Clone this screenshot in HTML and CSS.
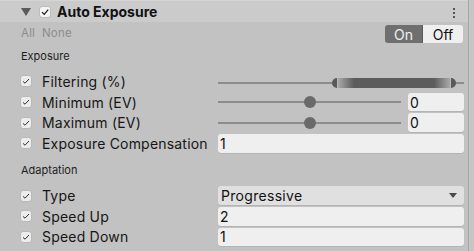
FILE: index.html
```html
<!DOCTYPE html>
<html>
<head>
<meta charset="utf-8">
<link rel="stylesheet" href="styles.css">
</head>
<body>
<div class="frame">
  <div class="main">
    <div class="header">
      <span class="tri"></span>
      <span class="cb hcb"><svg viewBox="0 0 10 10" width="10" height="10"><path d="M2 5.2 L4.2 7.4 L8.2 2.6" fill="none" stroke="#1a1a1a" stroke-width="1.2"/></svg></span>
      <span class="title">Auto Exposure</span>
      <span class="dots"><i></i><i></i><i></i></span>
    </div>
    <div class="toolbar">
      <span class="allnone">All&nbsp; None</span>
      <div class="toggle"><span class="on">On</span><span class="off">Off</span></div>
    </div>
    <div class="section s1">Exposure</div>
    <div class="row">
      <span class="cb"><svg viewBox="0 0 10 10" width="10" height="10"><path d="M2 5.4 L4 7.2 L8 3" fill="none" stroke="#333" stroke-width="1"/></svg></span>
      <span class="label">Filtering (%)</span>
      <div class="ctrl">
        <div class="range">
          <div class="track"></div>
          <div class="bar"><span class="cap l"></span><span class="body"></span><span class="cap r"></span></div>
        </div>
      </div>
    </div>
    <div class="row">
      <span class="cb"><svg viewBox="0 0 10 10" width="10" height="10"><path d="M2 5.4 L4 7.2 L8 3" fill="none" stroke="#333" stroke-width="1"/></svg></span>
      <span class="label">Minimum (EV)</span>
      <div class="ctrl">
        <div class="slider"><div class="track"></div><span class="knob"></span></div>
        <div class="field small">0</div>
      </div>
    </div>
    <div class="row">
      <span class="cb"><svg viewBox="0 0 10 10" width="10" height="10"><path d="M2 5.4 L4 7.2 L8 3" fill="none" stroke="#333" stroke-width="1"/></svg></span>
      <span class="label">Maximum (EV)</span>
      <div class="ctrl">
        <div class="slider"><div class="track"></div><span class="knob"></span></div>
        <div class="field small">0</div>
      </div>
    </div>
    <div class="row">
      <span class="cb"><svg viewBox="0 0 10 10" width="10" height="10"><path d="M2 5.4 L4 7.2 L8 3" fill="none" stroke="#333" stroke-width="1"/></svg></span>
      <span class="label">Exposure Compensation</span>
      <div class="ctrl"><div class="field">1</div></div>
    </div>
    <div class="section s2">Adaptation</div>
    <div class="row">
      <span class="cb"><svg viewBox="0 0 10 10" width="10" height="10"><path d="M2 5.4 L4 7.2 L8 3" fill="none" stroke="#333" stroke-width="1"/></svg></span>
      <span class="label">Type</span>
      <div class="ctrl"><div class="field dropdown"><span>Progressive</span><span class="arrow"></span></div></div>
    </div>
    <div class="row">
      <span class="cb"><svg viewBox="0 0 10 10" width="10" height="10"><path d="M2 5.4 L4 7.2 L8 3" fill="none" stroke="#333" stroke-width="1"/></svg></span>
      <span class="label">Speed Up</span>
      <div class="ctrl"><div class="field">2</div></div>
    </div>
    <div class="row">
      <span class="cb"><svg viewBox="0 0 10 10" width="10" height="10"><path d="M2 5.4 L4 7.2 L8 3" fill="none" stroke="#333" stroke-width="1"/></svg></span>
      <span class="label">Speed Down</span>
      <div class="ctrl"><div class="field">1</div></div>
    </div>
  </div>
  <div class="edge"></div>
</div>
</body>
</html>
```
FILE: styles.css
```css
html, body {
  margin: 0;
  padding: 0;
  background: #c2c2c2;
  width: 474px;
  height: 251px;
  overflow: hidden;
  font-family: Inter, "Noto Sans", sans-serif;
  color: #161616;
}
.frame {
  display: flex;
  height: 251px;
}
.main {
  width: 468px;
  display: flex;
  flex-direction: column;
}
.edge {
  width: 5px;
  border-left: 1px solid #a6a6a6;
  background: #c6c6c6;
}
.header {
  height: 21px;
  background: #cbcbcb;
  border-top: 1px solid #d4d4d4;
  display: flex;
  align-items: center;
  position: relative;
}
.tri {
  margin-left: 21px;
  width: 0;
  height: 0;
  border-left: 5px solid transparent;
  border-right: 5px solid transparent;
  border-top: 8px solid #5a5a5a;
}
.cb {
  width: 10px;
  height: 10px;
  background: #ececec;
  border-radius: 2px;
  box-shadow: 0 0 0 0.5px #b0b0b0;
  display: inline-flex;
  flex: none;
}
.hcb {
  margin-left: 9px;
  background: #f4f4f4;
}
.title {
  margin-left: 7px;
  font-weight: 700;
  font-size: 14px;
  color: #111;
}
.dots {
  position: absolute;
  left: 453px;
  top: 7px;
  display: flex;
  flex-direction: column;
  gap: 2px;
}
.dots i {
  width: 2px;
  height: 2px;
  background: #555;
  display: block;
}
.toolbar {
  height: 22px;
  display: flex;
  align-items: center;
  justify-content: space-between;
  padding-left: 21px;
  padding-right: 5px;
}
.allnone {
  font-size: 11.5px;
  color: #8d8d8d;
  letter-spacing: 0.2px;
}
.toggle {
  display: flex;
  height: 18px;
  border-radius: 3px;
  overflow: hidden;
  font-size: 14px;
  margin-top: 2px;
}
.toggle span {
  display: flex;
  align-items: center;
  justify-content: center;
}
.on {
  width: 37px;
  background: #6f6f6f;
  color: #f2f2f2;
  border-right: 1px solid #5a5a5a;
}
.off {
  width: 40px;
  background: #efefef;
  color: #111;
}
.section {
  font-size: 11px;
  padding-left: 21px;
  line-height: 14px;
  color: #1e1e1e;
}
.s1 {
  height: 22px;
  padding-top: 5px;
}
.s2 {
  height: 22.5px;
  padding-top: 9px;
}
.row {
  height: 20.7px;
  display: flex;
  align-items: center;
  padding-left: 21px;
}
.label {
  margin-left: 11px;
  font-size: 14px;
  letter-spacing: 0.2px;
  width: 175px;
  flex: none;
  white-space: nowrap;
}
.ctrl {
  width: 246px;
  margin-left: 1px;
  display: flex;
  align-items: center;
  gap: 7px;
}
.range, .slider {
  position: relative;
  height: 12px;
  flex: 1;
}
.track {
  position: absolute;
  left: 0;
  right: 0;
  top: 5px;
  height: 2px;
  background: #8c8c8c;
}
.range .track { top: 7px; }
.bar {
  position: absolute;
  left: 114px;
  width: 124px;
  top: 3px;
  height: 10px;
  display: flex;
}
.bar .cap {
  width: 5px;
  height: 10px;
  background: #5a5a5a;
}
.bar .cap.l { border-radius: 5px 0 0 5px; border-right: 1px solid #b8b8b8; }
.bar .cap.r { border-radius: 0 5px 5px 0; border-left: 1px solid #b8b8b8; }
.bar .body {
  flex: 1;
  background: linear-gradient(to right, #a9a9a9 0px, #5c5c5c 16px, #5c5c5c calc(100% - 16px), #a9a9a9 100%);
}
.knob {
  position: absolute;
  left: 86px;
  top: 0;
  width: 12px;
  height: 12px;
  border-radius: 50%;
  background: #6a6a6a;
}
.field {
  flex: 1;
  height: 18.5px;
  background: #efefef;
  border-radius: 3px;
  box-shadow: 0 1px 0 #b4b4b4;
  font-size: 14px;
  display: flex;
  align-items: center;
  padding-left: 2px;
  box-sizing: border-box;
  color: #111;
}
.field.small {
  flex: none;
  width: 56px;
}
.dropdown {
  background: #e0e0e0;
  justify-content: space-between;
  padding-left: 3px;
  padding-right: 7px;
  letter-spacing: 0.3px;
}
.arrow {
  width: 0;
  height: 0;
  border-left: 4px solid transparent;
  border-right: 4px solid transparent;
  border-top: 5px solid #4a4a4a;
}
```
